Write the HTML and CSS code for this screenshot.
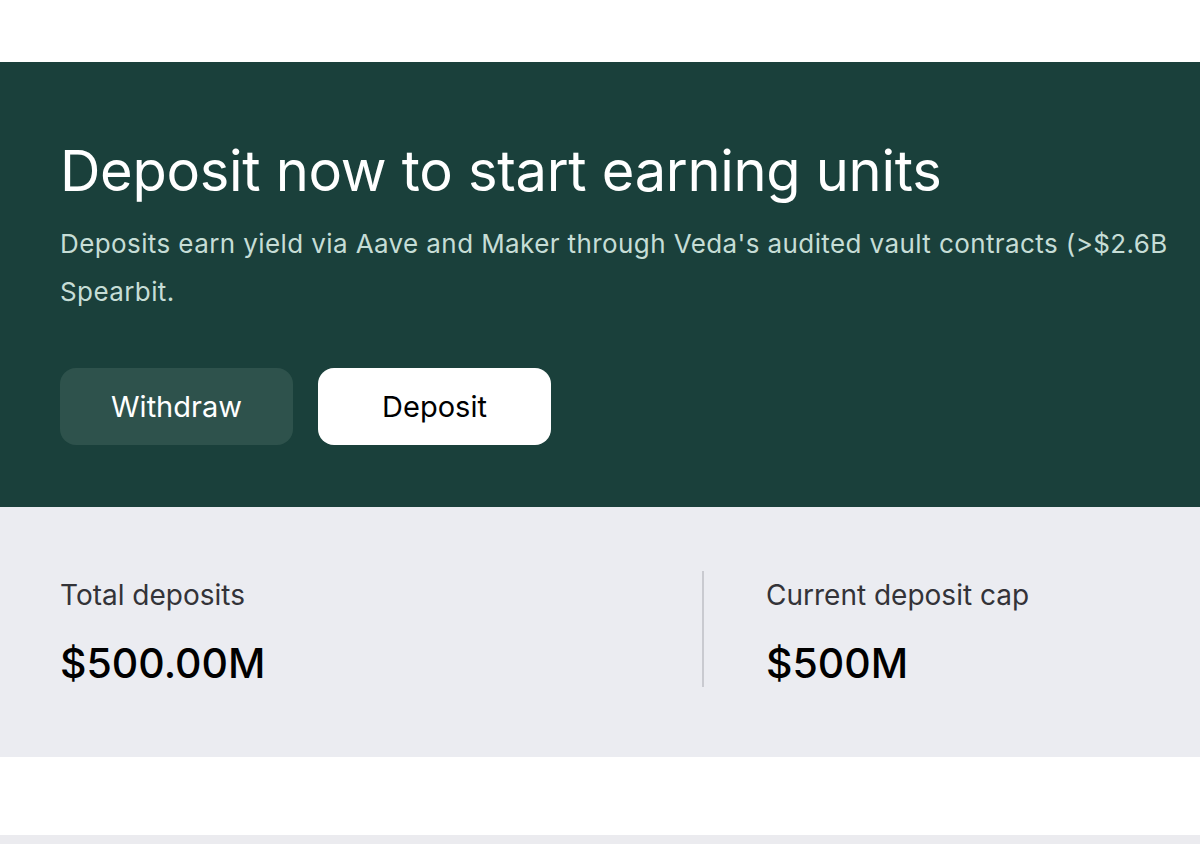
FILE: index.html
```html
<!DOCTYPE html>
<html lang="en">
<head>
  <meta charset="UTF-8">
  <meta name="viewport" content="width=device-width, initial-scale=1.0">
  <title>Vault - Deposit</title>
  <link rel="stylesheet" href="styles.css">
</head>
<body>
  <div class="page">
    <section class="hero">
      <h1>Deposit now to start earning units</h1>
      <p class="hero-text">Deposits earn yield via Aave and Maker through Veda's audited vault contracts (&gt;$2.6B<br>Spearbit.</p>
      <div class="actions">
        <button class="btn btn-ghost" type="button">Withdraw</button>
        <button class="btn btn-light" type="button">Deposit</button>
      </div>
    </section>

    <section class="stats">
      <div class="stat">
        <div class="stat-label">Total deposits</div>
        <div class="stat-value">$500.00M</div>
      </div>
      <div class="stat stat-right">
        <div class="stat-label">Current deposit cap</div>
        <div class="stat-value">$500M</div>
      </div>
    </section>

    <div class="spacer"></div>
    <div class="next-section"></div>
  </div>
</body>
</html>
```

FILE: styles.css
```css
body {
  margin: 0;
  padding: 0;
  background-color: #ffffff;
  font-family: Inter, 'Noto Sans', sans-serif;
  overflow: hidden;
}

.page {
  padding-top: 62px;
}

.hero {
  background-color: #1a403b;
  padding: 76px 60px 62px;
  height: 307px;
}

.hero h1 {
  margin: 0;
  color: #ffffff;
  font-size: 56px;
  font-weight: 400;
  line-height: 66px;
  letter-spacing: -0.3px;
}

.hero-text {
  margin: 16px 0 0;
  color: #c6ddd6;
  font-size: 26px;
  line-height: 48px;
  letter-spacing: 0.4px;
  white-space: nowrap;
}

.actions {
  display: flex;
  gap: 25px;
  margin-top: 52px;
}

.btn {
  width: 233px;
  height: 77px;
  border: none;
  border-radius: 16px;
  font-family: inherit;
  font-size: 29px;
  cursor: pointer;
}

.btn-ghost {
  background-color: #2e524c;
  color: #ffffff;
}

.btn-light {
  background-color: #ffffff;
  color: #000000;
}

.stats {
  background-color: #ebecf1;
  display: grid;
  grid-template-columns: 642px 1fr;
  padding: 64px 60px 70px;
  height: 116px;
}

.stat-right {
  border-left: 2px solid #c9cad0;
  padding-left: 62px;
}

.stat-label {
  color: #333338;
  font-size: 28px;
  line-height: 32px;
  margin-top: 8px;
}

.stat-value {
  color: #000000;
  font-size: 41px;
  font-weight: 500;
  line-height: 48px;
  margin-top: 28px;
}

.spacer {
  height: 78px;
}

.next-section {
  background-color: #ebebef;
  height: 20px;
}
```
